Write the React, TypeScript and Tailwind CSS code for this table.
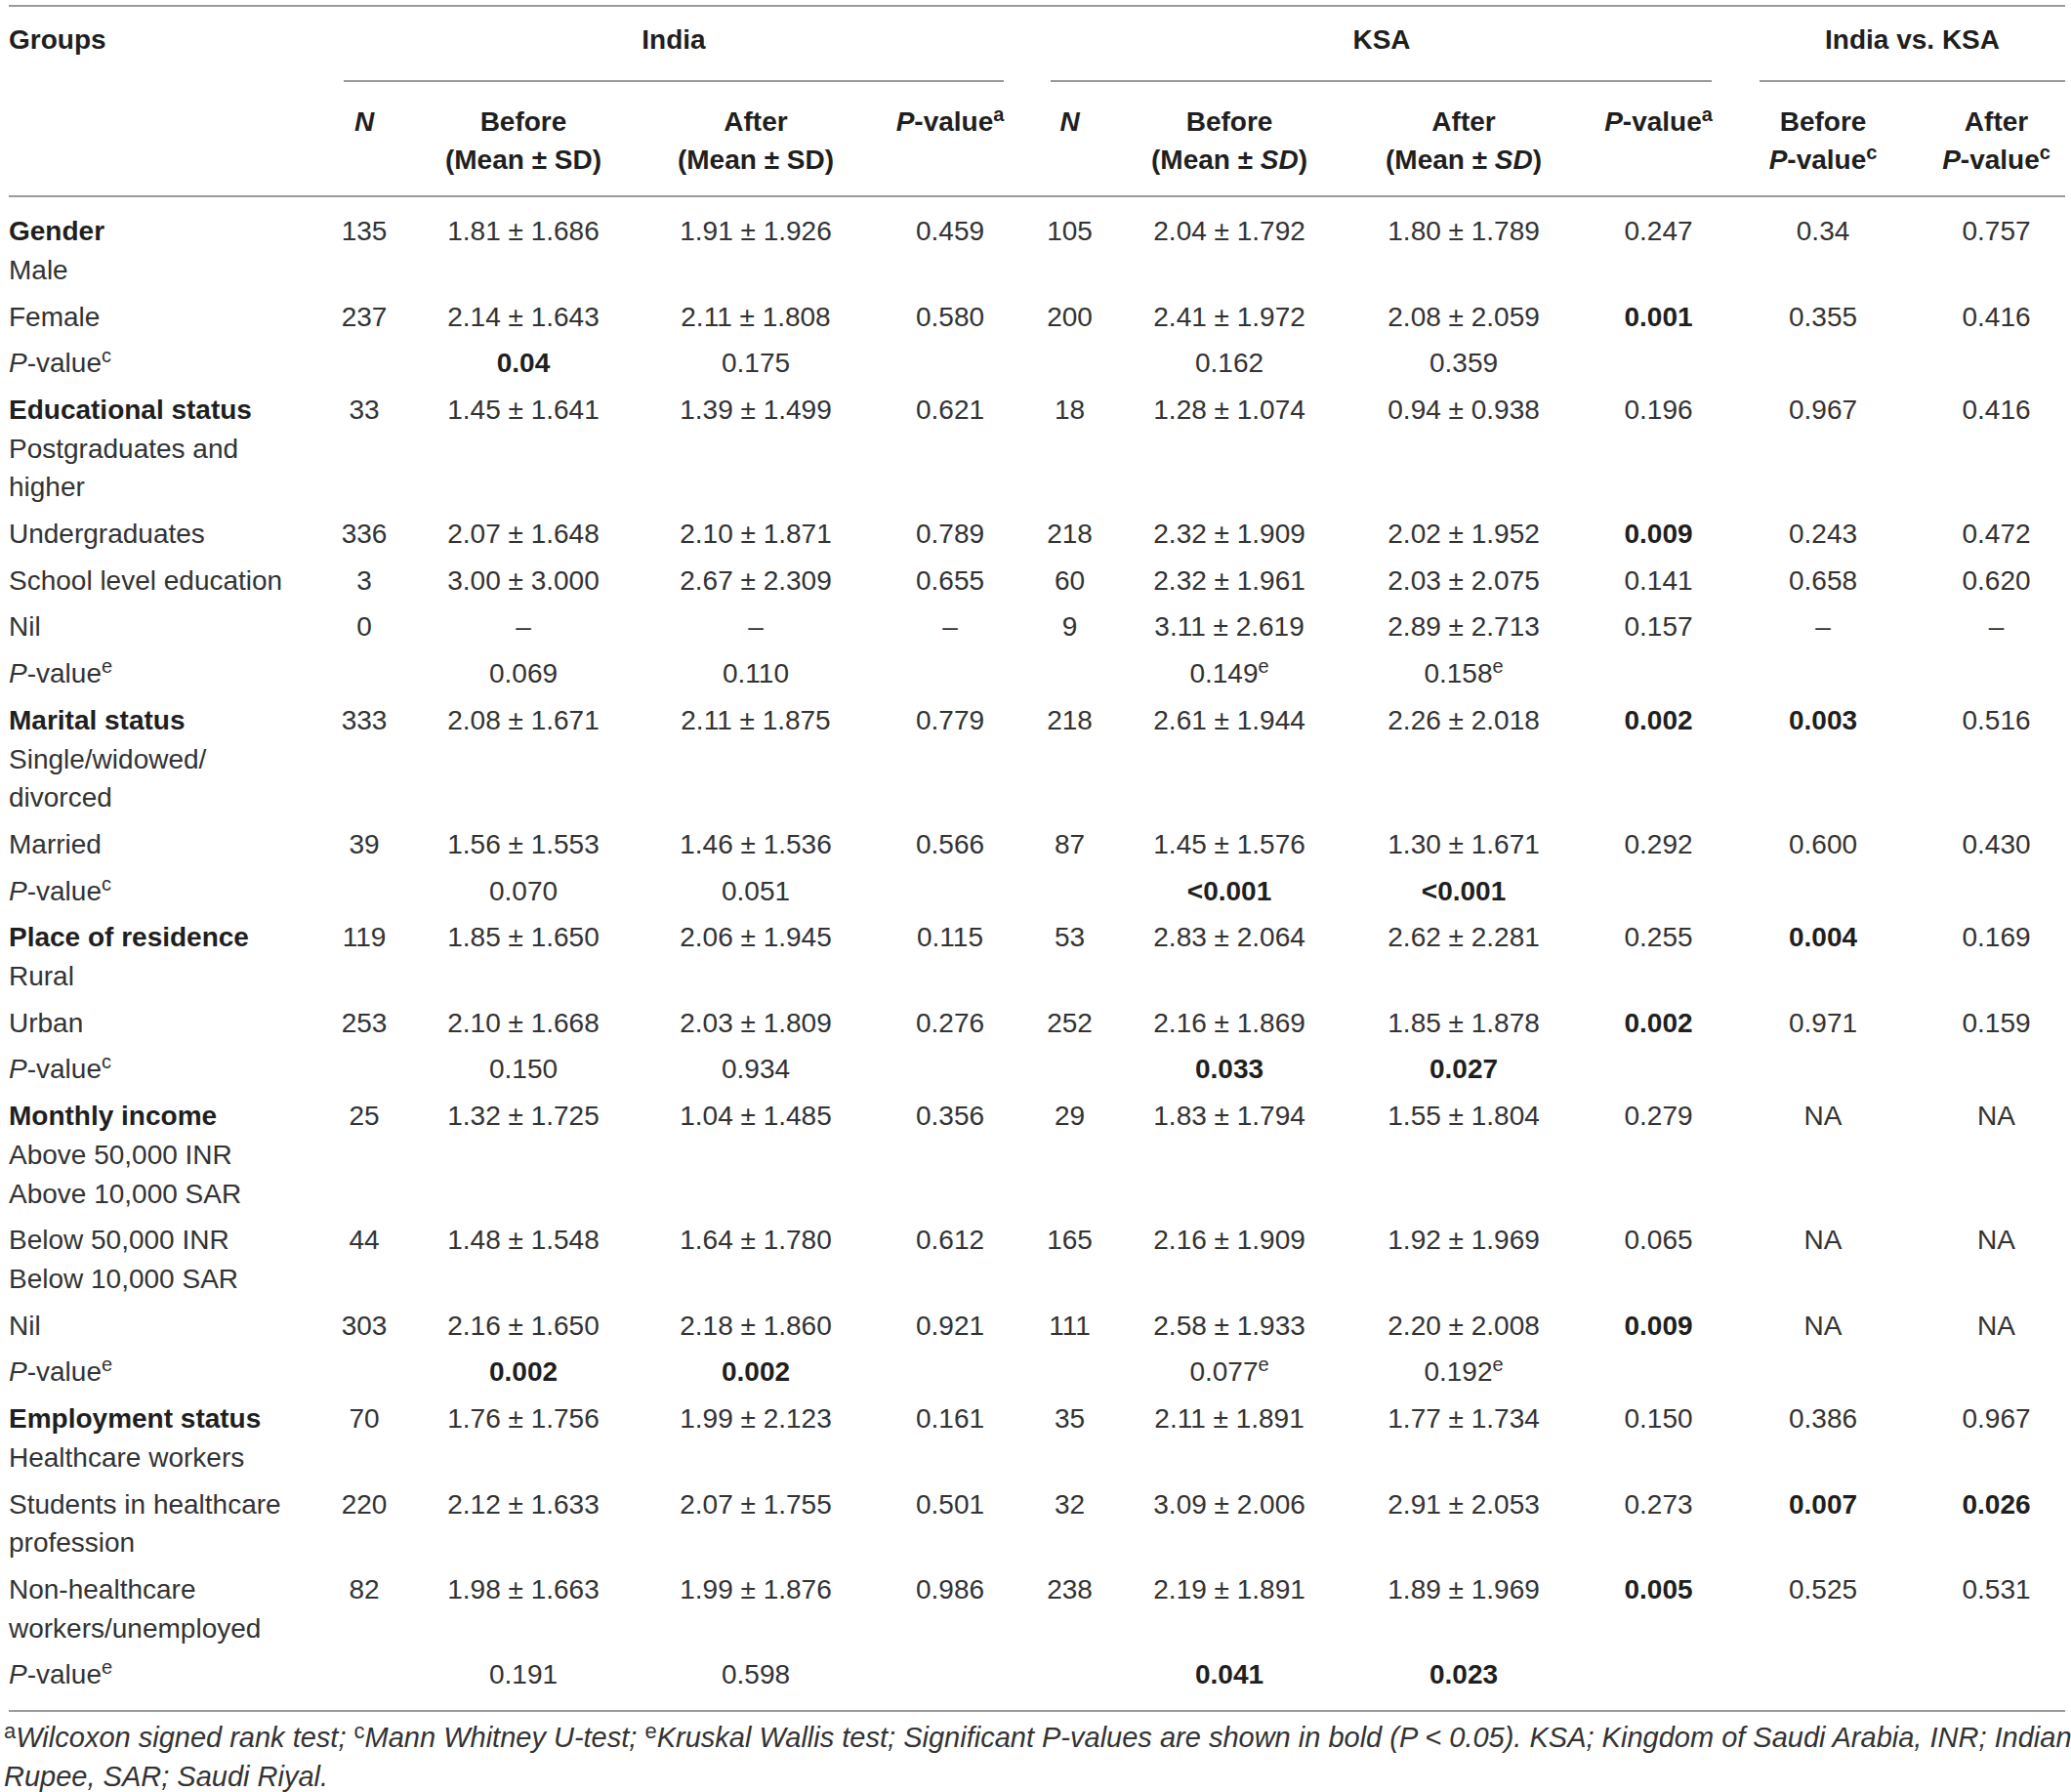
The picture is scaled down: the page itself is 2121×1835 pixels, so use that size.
import type { ReactNode } from "react"

type Cell = string | { v: string; b?: boolean; sup?: string }

type Row = {
  label: ReactNode
  cells: Cell[]
}

const PV = ({ s }: { s: string }) => (
  <span>
    <i>P</i>-value<sup className="text-[20px] top-[-10px]">{s}</sup>
  </span>
)

const B = (v: string): Cell => ({ v, b: true })

const rows: Row[] = [
  {
    label: (
      <>
        <b className="font-bold text-[#1f1f1f]">Gender</b>
        <br />
        Male
      </>
    ),
    cells: ["135", "1.81 ± 1.686", "1.91 ± 1.926", "0.459", "105", "2.04 ± 1.792", "1.80 ± 1.789", "0.247", "0.34", "0.757"],
  },
  {
    label: "Female",
    cells: ["237", "2.14 ± 1.643", "2.11 ± 1.808", "0.580", "200", "2.41 ± 1.972", "2.08 ± 2.059", B("0.001"), "0.355", "0.416"],
  },
  { label: <PV s="c" />, cells: ["", B("0.04"), "0.175", "", "", "0.162", "0.359", "", "", ""] },
  {
    label: (
      <>
        <b className="font-bold text-[#1f1f1f]">Educational status</b>
        <br />
        Postgraduates and
        <br />
        higher
      </>
    ),
    cells: ["33", "1.45 ± 1.641", "1.39 ± 1.499", "0.621", "18", "1.28 ± 1.074", "0.94 ± 0.938", "0.196", "0.967", "0.416"],
  },
  {
    label: "Undergraduates",
    cells: ["336", "2.07 ± 1.648", "2.10 ± 1.871", "0.789", "218", "2.32 ± 1.909", "2.02 ± 1.952", B("0.009"), "0.243", "0.472"],
  },
  {
    label: "School level education",
    cells: ["3", "3.00 ± 3.000", "2.67 ± 2.309", "0.655", "60", "2.32 ± 1.961", "2.03 ± 2.075", "0.141", "0.658", "0.620"],
  },
  {
    label: "Nil",
    cells: ["0", "–", "–", "–", "9", "3.11 ± 2.619", "2.89 ± 2.713", "0.157", "–", "–"],
  },
  {
    label: <PV s="e" />,
    cells: ["", "0.069", "0.110", "", "", { v: "0.149", sup: "e" }, { v: "0.158", sup: "e" }, "", "", ""],
  },
  {
    label: (
      <>
        <b className="font-bold text-[#1f1f1f]">Marital status</b>
        <br />
        Single/widowed/
        <br />
        divorced
      </>
    ),
    cells: ["333", "2.08 ± 1.671", "2.11 ± 1.875", "0.779", "218", "2.61 ± 1.944", "2.26 ± 2.018", B("0.002"), B("0.003"), "0.516"],
  },
  {
    label: "Married",
    cells: ["39", "1.56 ± 1.553", "1.46 ± 1.536", "0.566", "87", "1.45 ± 1.576", "1.30 ± 1.671", "0.292", "0.600", "0.430"],
  },
  { label: <PV s="c" />, cells: ["", "0.070", "0.051", "", "", B("<0.001"), B("<0.001"), "", "", ""] },
  {
    label: (
      <>
        <b className="font-bold text-[#1f1f1f]">Place of residence</b>
        <br />
        Rural
      </>
    ),
    cells: ["119", "1.85 ± 1.650", "2.06 ± 1.945", "0.115", "53", "2.83 ± 2.064", "2.62 ± 2.281", "0.255", B("0.004"), "0.169"],
  },
  {
    label: "Urban",
    cells: ["253", "2.10 ± 1.668", "2.03 ± 1.809", "0.276", "252", "2.16 ± 1.869", "1.85 ± 1.878", B("0.002"), "0.971", "0.159"],
  },
  { label: <PV s="c" />, cells: ["", "0.150", "0.934", "", "", B("0.033"), B("0.027"), "", "", ""] },
  {
    label: (
      <>
        <b className="font-bold text-[#1f1f1f]">Monthly income</b>
        <br />
        Above 50,000 INR
        <br />
        Above 10,000 SAR
      </>
    ),
    cells: ["25", "1.32 ± 1.725", "1.04 ± 1.485", "0.356", "29", "1.83 ± 1.794", "1.55 ± 1.804", "0.279", "NA", "NA"],
  },
  {
    label: (
      <>
        Below 50,000 INR
        <br />
        Below 10,000 SAR
      </>
    ),
    cells: ["44", "1.48 ± 1.548", "1.64 ± 1.780", "0.612", "165", "2.16 ± 1.909", "1.92 ± 1.969", "0.065", "NA", "NA"],
  },
  {
    label: "Nil",
    cells: ["303", "2.16 ± 1.650", "2.18 ± 1.860", "0.921", "111", "2.58 ± 1.933", "2.20 ± 2.008", B("0.009"), "NA", "NA"],
  },
  {
    label: <PV s="e" />,
    cells: ["", B("0.002"), B("0.002"), "", "", { v: "0.077", sup: "e" }, { v: "0.192", sup: "e" }, "", "", ""],
  },
  {
    label: (
      <>
        <b className="font-bold text-[#1f1f1f]">Employment status</b>
        <br />
        Healthcare workers
      </>
    ),
    cells: ["70", "1.76 ± 1.756", "1.99 ± 2.123", "0.161", "35", "2.11 ± 1.891", "1.77 ± 1.734", "0.150", "0.386", "0.967"],
  },
  {
    label: (
      <>
        Students in healthcare
        <br />
        profession
      </>
    ),
    cells: ["220", "2.12 ± 1.633", "2.07 ± 1.755", "0.501", "32", "3.09 ± 2.006", "2.91 ± 2.053", "0.273", B("0.007"), B("0.026")],
  },
  {
    label: (
      <>
        Non-healthcare
        <br />
        workers/unemployed
      </>
    ),
    cells: ["82", "1.98 ± 1.663", "1.99 ± 1.876", "0.986", "238", "2.19 ± 1.891", "1.89 ± 1.969", B("0.005"), "0.525", "0.531"],
  },
  { label: <PV s="e" />, cells: ["", "0.191", "0.598", "", "", B("0.041"), B("0.023"), "", "", ""] },
]

function renderCell(c: Cell) {
  if (typeof c === "string") return c
  return (
    <span className={c.b ? "font-bold text-[#1f1f1f]" : ""}>
      {c.v}
      {c.sup && <sup className="text-[20px] top-[-10px]">{c.sup}</sup>}
    </span>
  )
}

export default function App() {
  const last = rows.length - 1
  return (
    <div className="w-[2121px] min-h-[1835px] bg-white text-[#333] font-['Liberation_Sans',Arial,sans-serif] text-[28px] leading-[39.7px]">
      <div className="pt-[5px] pl-[9px]">
        <table className="w-[2106px] table-fixed border-collapse">
          <colgroup>
            <col className="w-[319px]" />
            <col className="w-[90px]" />
            <col className="w-[236px]" />
            <col className="w-[240px]" />
            <col className="w-[158px]" />
            <col className="w-[87px]" />
            <col className="w-[240px]" />
            <col className="w-[240px]" />
            <col className="w-[159px]" />
            <col className="w-[178px]" />
            <col className="w-[159px]" />
          </colgroup>
          <thead className="font-bold text-[#1f1f1f]">
            <tr className="border-t-2 border-[#9a9a9a]">
              <th className="text-left align-top pt-[14px] font-bold">Groups</th>
              <th colSpan={4} className="align-top pt-[14px] font-bold">
                <div>India</div>
                <div className="mt-[21px] mx-[24px] h-[2px] bg-[#9a9a9a]" />
              </th>
              <th colSpan={4} className="align-top pt-[14px] font-bold">
                <div>KSA</div>
                <div className="mt-[21px] ml-[24px] mr-[25px] h-[2px] bg-[#9a9a9a]" />
              </th>
              <th colSpan={2} className="align-top pt-[14px] font-bold">
                <div className="pl-[24px]">India vs. KSA</div>
                <div className="mt-[21px] ml-[24px] h-[2px] bg-[#9a9a9a]" />
              </th>
            </tr>
            <tr className="border-b-2 border-[#9a9a9a]">
              <th className="pt-[21px] pb-[16px]" />
              <th className="align-top pt-[21px] pb-[16px] font-bold">
                <i>N</i>
              </th>
              <th className="align-top pt-[21px] pb-[16px] font-bold">
                Before
                <br />
                (Mean ± SD)
              </th>
              <th className="align-top pt-[21px] pb-[16px] font-bold">
                After
                <br />
                (Mean ± SD)
              </th>
              <th className="align-top pt-[21px] pb-[16px] font-bold">
                <PV s="a" />
              </th>
              <th className="align-top pt-[21px] pb-[16px] font-bold">
                <i>N</i>
              </th>
              <th className="align-top pt-[21px] pb-[16px] font-bold">
                Before
                <br />
                (Mean ± <i>SD</i>)
              </th>
              <th className="align-top pt-[21px] pb-[16px] font-bold">
                After
                <br />
                (Mean ± <i>SD</i>)
              </th>
              <th className="align-top pt-[21px] pb-[16px] font-bold">
                <PV s="a" />
              </th>
              <th className="align-top pt-[21px] pb-[16px] font-bold">
                Before
                <br />
                <PV s="c" />
              </th>
              <th className="align-top pt-[21px] pb-[16px] pl-[18px] font-bold">
                After
                <br />
                <PV s="c" />
              </th>
            </tr>
          </thead>
          <tbody className="border-b-2 border-[#9a9a9a]">
            {rows.map((r, i) => {
              const pad = i === 0 ? "pt-[15px] pb-[4px]" : i === last ? "pt-[4px] pb-[16px]" : "py-[4px]"
              return (
                <tr key={i}>
                  <td className={`align-top text-left whitespace-nowrap ${pad}`}>{r.label}</td>
                  {r.cells.map((c, j) => (
                    <td key={j} className={`align-top text-center whitespace-nowrap ${pad} ${j === 9 ? "pl-[18px]" : ""}`}>
                      {renderCell(c)}
                    </td>
                  ))}
                </tr>
              )
            })}
          </tbody>
        </table>
      </div>
      <p className="mt-[6px] pl-[4px] w-[2121px] italic text-[29px] leading-[40px] whitespace-nowrap">
        <sup className="not-italic text-[22px] top-[-9px]">a</sup>Wilcoxon signed rank test;{" "}
        <sup className="not-italic text-[22px] top-[-9px]">c</sup>Mann Whitney U-test;{" "}
        <sup className="not-italic text-[22px] top-[-9px]">e</sup>Kruskal Wallis test; Significant P-values are shown in bold (P {"<"} 0.05). KSA; Kingdom of Saudi Arabia, INR; Indian
        <br />
        Rupee, SAR; Saudi Riyal.
      </p>
    </div>
  )
}
